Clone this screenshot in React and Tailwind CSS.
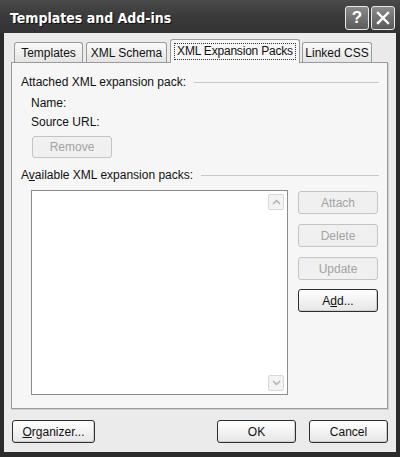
import React from "react";

const font = { fontFamily: '"Liberation Sans", Arial, sans-serif' };
const titleFont = { fontFamily: '"Liberation Sans Narrow", "DejaVu Sans Condensed", "Arial Narrow", sans-serif', textShadow: "1px 1px 0 #111" };

function Btn({ children, disabled, className = "" }) {
  return (
    <div
      className={
        "flex items-center justify-center rounded-[3px] border text-[12px] leading-[14px] whitespace-nowrap " +
        (disabled
          ? "border-[#c4c4c4] bg-[#f0f0f0] text-[#a3a3a3] "
          : "border-[#2e2e2e] bg-gradient-to-b from-[#ffffff] to-[#e6e6e6] text-[#111] shadow-[inset_-1px_-1px_0_#cfcfcf] ") +
        className
      }
    >
      {children}
    </div>
  );
}

function Tab({ children, selected, className = "" }) {
  return (
    <div
      className={
        "flex items-center justify-center border border-b-0 rounded-t-[3px] text-[12px] leading-[14px] text-[#111] whitespace-nowrap " +
        (selected
          ? "h-[24px] border-[#9a9a9a] bg-[#f6f6f6] z-10 -mb-px px-[3px] "
          : "h-[20px] border-[#9a9a9a] bg-gradient-to-b from-[#fafafa] to-[#e4e4e4] ") +
        className
      }
    >
      {children}
    </div>
  );
}

export default function App() {
  return (
    <div className="w-[400px] h-[457px] bg-[#2b2b2b] flex flex-col" style={font}>
      {/* Title bar */}
      <div className="h-[33px] flex items-center justify-between pl-[10px] pr-[5px] bg-gradient-to-b from-[#4a4a4a] via-[#3a3a3a] to-[#333333]">
        <span className="text-white font-bold text-[14px] leading-[18px] pt-[2px]" style={titleFont}>
          Templates and Add-ins
        </span>
        <div className="flex gap-[2px] pt-[2px]">
          <div className="w-[24px] h-[24px] rounded-[3px] border border-[#e8e8e8] bg-gradient-to-b from-[#8a8a8a] to-[#5a5a5a] flex items-center justify-center text-white font-bold text-[17px] leading-none">
            ?
          </div>
          <div className="w-[24px] h-[24px] rounded-[3px] border border-[#e8e8e8] bg-gradient-to-b from-[#8a8a8a] to-[#5a5a5a] flex items-center justify-center">
            <svg width="14" height="14" viewBox="0 0 14 14">
              <path d="M2 2 L12 12 M12 2 L2 12" stroke="#fff" strokeWidth="2.4" strokeLinecap="square" />
            </svg>
          </div>
        </div>
      </div>

      {/* Body */}
      <div className="flex-1 mx-[4px] mb-[5px] bg-[#ebebeb] flex flex-col">
        {/* Tabs */}
        <div className="flex items-end pl-[10px] pt-[7px] h-[29px]">
          <Tab className="w-[69px]">Templates</Tab>
          <Tab className="w-[81px] ml-[3px]">XML Schema</Tab>
          <Tab selected className="w-[130px] ml-[3px]">
            <span className="outline outline-1 outline-dotted outline-[#333] px-[2px] leading-[15px] tracking-[-0.2px]">XML Expansion Packs</span>
          </Tab>
          <Tab className="w-[70px] ml-[2px]">Linked CSS</Tab>
        </div>

        {/* Panel */}
        <div className="ml-[7px] mr-[8px] h-[347px] border border-[#9a9a9a] bg-[#f6f6f6] shadow-[1px_1px_0_#d0d0d0] flex flex-col text-[12px] leading-[14px] text-[#111]">
          <div className="flex items-center mt-[12px] pl-[9px] pr-[8px]">
            <span>Attached XML expansion pack:</span>
            <div className="flex-1 ml-[8px] h-px bg-[#c8c8c8]"></div>
          </div>
          <div className="pl-[19px] mt-[7px]">Name:</div>
          <div className="pl-[19px] mt-[5px]">Source URL:</div>
          <Btn disabled className="ml-[20px] mt-[7px] w-[80px] h-[22px]">Remove</Btn>
          <div className="flex items-center mt-[10px] pl-[9px] pr-[8px]">
            <span>
              A<span className="underline">v</span>ailable XML expansion packs:
            </span>
            <div className="flex-1 ml-[8px] h-px bg-[#c8c8c8]"></div>
          </div>
          <div className="flex mt-[8px] pl-[19px]">
            <div className="w-[257px] h-[205px] border border-[#8c8c8c] bg-white flex justify-end">
              <div className="w-[17px] flex flex-col justify-between py-[3px] mr-[2px]">
                <div className="w-[16px] h-[16px] border border-[#d8d8d8] rounded-[2px] bg-[#f3f3f3] flex items-center justify-center">
                  <svg width="9" height="6" viewBox="0 0 9 6"><path d="M1 5 L4.5 1.5 L8 5" stroke="#b0b0b0" strokeWidth="1.5" fill="none" /></svg>
                </div>
                <div className="w-[16px] h-[16px] border border-[#d8d8d8] rounded-[2px] bg-[#f3f3f3] flex items-center justify-center">
                  <svg width="9" height="6" viewBox="0 0 9 6"><path d="M1 1 L4.5 4.5 L8 1" stroke="#b0b0b0" strokeWidth="1.5" fill="none" /></svg>
                </div>
              </div>
            </div>
            <div className="flex flex-col ml-[10px] pt-[1px]">
              <Btn disabled className="w-[80px] h-[23px]">Attach</Btn>
              <Btn disabled className="w-[80px] h-[23px] mt-[10px]">Delete</Btn>
              <Btn disabled className="w-[80px] h-[23px] mt-[10px]">Update</Btn>
              <Btn className="w-[80px] h-[23px] mt-[9px]">
                <span>A<span className="underline">d</span>d...</span>
              </Btn>
            </div>
          </div>
        </div>

        {/* Bottom buttons */}
        <div className="flex items-center mt-[11px] pl-[8px] pr-[8px]">
          <Btn className="w-[83px] h-[23px]">
            <span><span className="underline">O</span>rganizer...</span>
          </Btn>
          <div className="flex-1"></div>
          <Btn className="w-[79px] h-[23px]">OK</Btn>
          <Btn className="w-[79px] h-[23px] ml-[13px]">Cancel</Btn>
        </div>
      </div>
    </div>
  );
}
